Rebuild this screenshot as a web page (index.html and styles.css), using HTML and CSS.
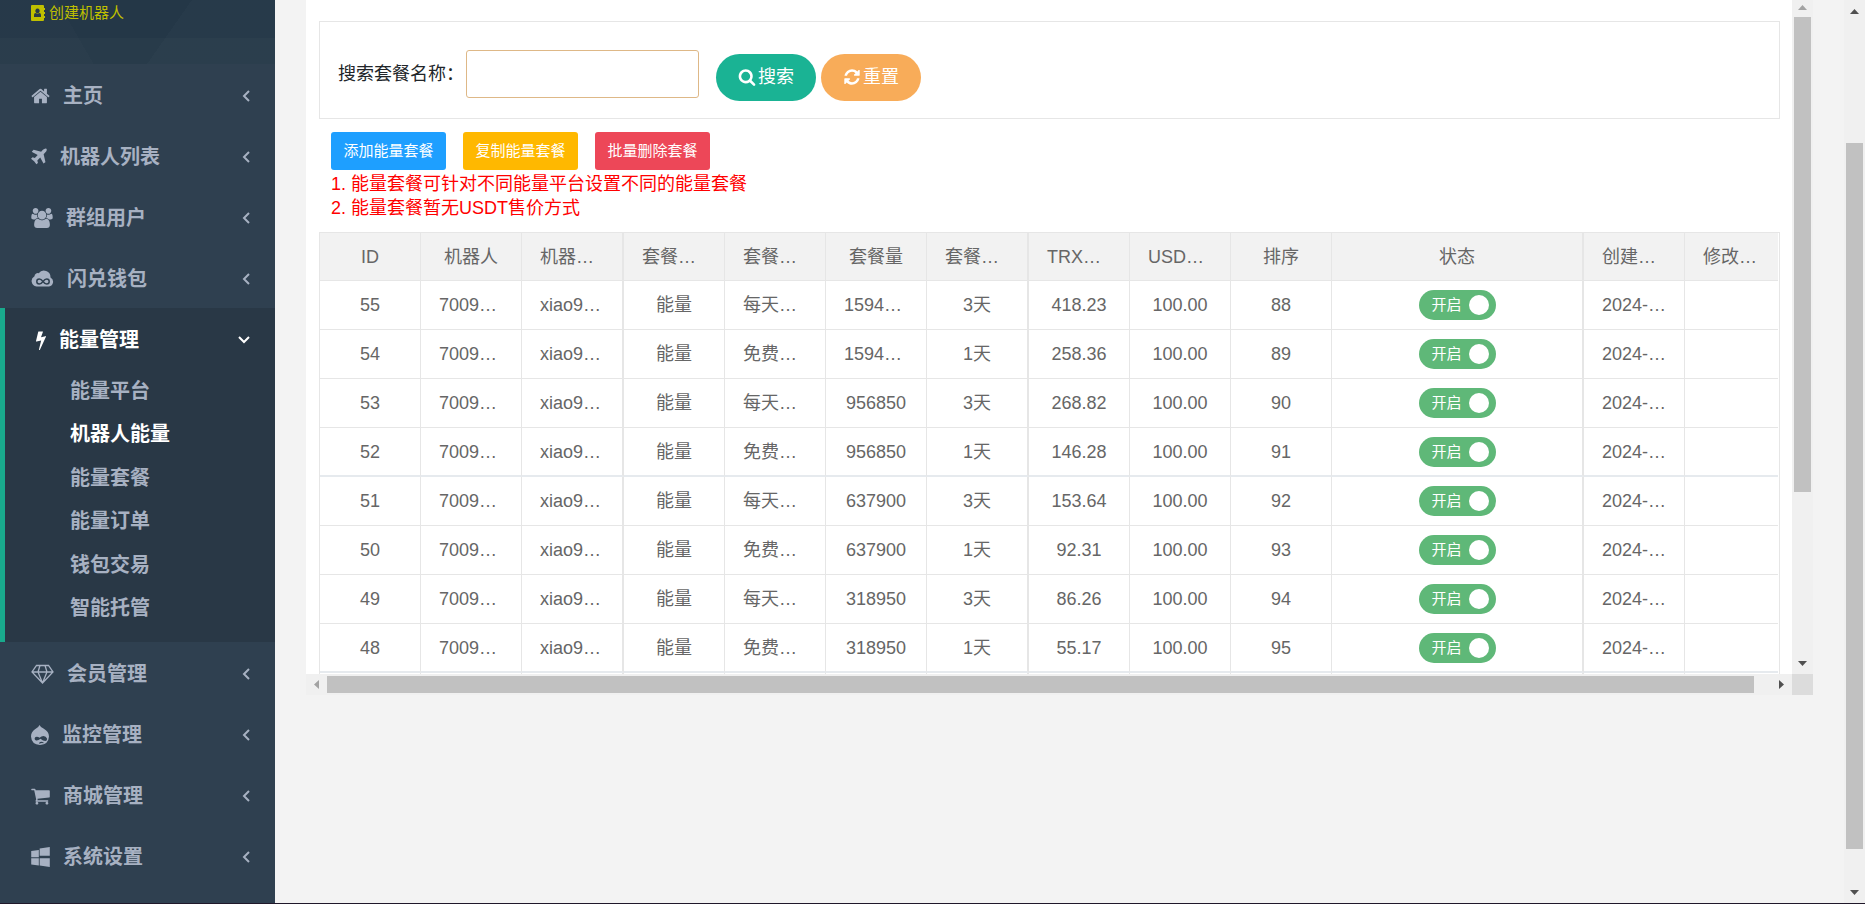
FILE: index.html
```html
<!DOCTYPE html>
<html lang="zh-CN">
<head>
<meta charset="utf-8">
<title>能量套餐</title>
<link rel="stylesheet" href="styles.css">
</head>
<body>
<div class="app">
  <nav class="sidebar">
    <div class="profile">
      <a class="profile-link" href="#"><svg class="book" viewBox="0 0 15 16"><path fill="currentColor" fill-rule="evenodd" d="M1 0h11q1 0 1 1v2h1v2h-1v2h1v2h-1v2h1v2h-1v2q0 1-1 1H1q-1 0-1-1V1q0-1 1-1zM6.500 3.500a2.200 2.400 0 1 0 .01 0zM3 12h7V10q0-2-1.700-2Q6.500 9.500 4.700 8 3 8 3 10z"/></svg>创建机器人</a>
    </div>
    <ul class="menu">
      <li><a class="item" href="#"><svg class="w19" viewBox="64 0 1664 1792"><path d="M1472 992v480q0 26-19 45t-45 19h-384v-384h-256v384h-384q-26 0-45-19t-19-45v-480q0-1 .5-3t.5-3l575-474 575 474q1 2 1 6zm223-69l-62 74q-8 9-21 11h-3q-13 0-21-7l-692-577-692 577q-12 8-24 7-13-2-21-11l-62-74q-8-10-7-23.500t11-21.500l719-599q32-26 76-26t76 26l244 204v-195q0-14 9-23t23-9h192q14 0 23 9t9 23v408l219 182q10 8 11 21.500t-7 23.500z"/></svg><span>主页</span><svg class="arrow" viewBox="0 0 8 12"><path d="M7 1L2 6l5 5"/></svg></a></li>
      <li><a class="item" href="#"><svg class="w16" viewBox="192 0 1408 1792"><path d="M1568 160q44 52 12 148t-108 172l-161 161 160 696q5 19-12 33l-128 96q-7 6-19 6-4 0-7-1-15-3-21-16l-279-508-259 259 53 194q5 17-8 31l-96 96q-9 9-23 9h-2q-15-2-24-13l-189-252-252-189q-11-7-13-23-1-13 9-25l96-97q9-9 23-9 6 0 8 1l194 53 259-259-508-279q-14-8-17-24-2-16 9-27l128-128q14-13 30-8l665 159 160-160q76-76 172-108t148 12z"/></svg><span>机器人列表</span><svg class="arrow" viewBox="0 0 8 12"><path d="M7 1L2 6l5 5"/></svg></a></li>
      <li><a class="item" href="#"><svg class="w22" viewBox="-64 0 1920 1792"><path d="M529 896q-162 5-265 128h-134q-82 0-138-40.500t-56-118.500q0-353 124-353 6 0 43.500 21t97.500 42.500 119 21.500q67 0 133-23-5 37-5 66 0 139 81 256zm1071 637q0 120-73 189.500t-194 69.500h-874q-121 0-194-69.500t-73-189.500q0-53 3.500-103.500t14-109 26.500-108.500 43-97.500 62-81 85.500-53.500 111.500-20q10 0 43 21.500t73 48 107 48 135 21.500 135-21.500 107-48 73-48 43-21.500q61 0 111.500 20t85.500 53.500 62 81 43 97.500 26.500 108.500 14 109 3.500 103.500zm-1024-1277q0 106-75 181t-181 75-181-75-75-181 75-181 181-75 181 75 75 181zm704 384q0 159-112.500 271.500t-271.500 112.500-271.500-112.500-112.500-271.500 112.500-271.500 271.500-112.500 271.500 112.500 112.500 271.500zm576 225q0 78-56 118.500t-138 40.500h-134q-103-123-265-128 81-117 81-256 0-29-5-66 66 23 133 23 59 0 119-21.500t97.500-42.500 43.500-21q124 0 124 353zm-128-609q0 106-75 181t-181 75-181-75-75-181 75-181 181-75 181 75 75 181z"/></svg><span>群组用户</span><svg class="arrow" viewBox="0 0 8 12"><path d="M7 1L2 6l5 5"/></svg></a></li>
      <li><a class="item" href="#"><svg class="w23" viewBox="0 0 23 20"><path d="M5.500 17.500A5.500 5.500 0 0 1 3.500 7.200a3.300 3.300 0 0 1 4.200-3A6.600 6.600 0 0 1 19.500 8.500 4.800 4.800 0 0 1 18 17.500z"/><path class="infinity" d="M12 12.500C10.500 10.500 9.500 10 8.300 10a2.500 2.500 0 0 0 0 5c1.200 0 2.200-.5 3.700-2.500s2.500-2.500 3.700-2.500a2.500 2.500 0 0 1 0 5c-1.200 0-2.200-.5-3.700-2.500z"/></svg><span>闪兑钱包</span><svg class="arrow" viewBox="0 0 8 12"><path d="M7 1L2 6l5 5"/></svg></a></li>
      <li class="active"><a class="item" href="#"><svg class="w10" viewBox="448 0 896 1792"><path d="M1333 566q18 20 7 44l-540 1157q-13 25-42 25-4 0-14-2-17-5-25.500-19t-4.500-30l197-808-406 101q-4 1-12 1-18 0-31-11-18-15-13-39l201-825q4-16 17-26t31-10h328q19 0 32 12.500t13 29.500q0 8-5 18l-171 463 396-98q8-2 12-2 19 0 34 15z"/></svg><span>能量管理</span><svg class="arrow down" viewBox="0 0 12 8"><path d="M1 1l5 5 5-5"/></svg></a>
        <ul class="submenu">
          <li><a href="#">能量平台</a></li>
          <li><a class="current" href="#">机器人能量</a></li>
          <li><a href="#">能量套餐</a></li>
          <li><a href="#">能量订单</a></li>
          <li><a href="#">钱包交易</a></li>
          <li><a href="#">智能托管</a></li>
        </ul>
      </li>
      <li><a class="item" href="#"><svg class="w23" viewBox="0 0 23 20"><path class="line" d="M5.500 1.500h12L22 8 11.500 19 1 8zM1 8h21M9 1.500L7 8l4.500 11L16 8l-2-6.500"/></svg><span>会员管理</span><svg class="arrow" viewBox="0 0 8 12"><path d="M7 1L2 6l5 5"/></svg></a></li>
      <li><a class="item" href="#"><svg class="w18" viewBox="0 0 18 20"><path fill-rule="evenodd" d="M8.500 0q1 2 4 3.500Q18 6.500 18 11.500 17.500 19.500 9 20 .5 19.500 0 11.500 0 7 4 4.300 8 2 8.500 0zM12.500 11q-2 0-4 1.800Q6.500 11 4.500 12 2.500 14 5 15.500q2 .5 4.500-1.700Q12 16 14.500 16q2-.5 1.500-2.500-1-2.500-3.500-2.500zM8 18q2-2 4.500-.5.500.5 0 .8-2-.8-3.500.3-.8.200-1-.6z"/></svg><span>监控管理</span><svg class="arrow" viewBox="0 0 8 12"><path d="M7 1L2 6l5 5"/></svg></a></li>
      <li><a class="item" href="#"><svg class="w19" viewBox="64 0 1664 1792"><path d="M704 1536q0 52-38 90t-90 38-90-38-38-90 38-90 90-38 90 38 38 90zm896 0q0 52-38 90t-90 38-90-38-38-90 38-90 90-38 90 38 38 90zm128-1088v512q0 24-16.500 42.500t-40.500 21.500l-1044 122q13 60 13 70 0 16-24 64h920q26 0 45 19t19 45-19 45-45 19h-1024q-26 0-45-19t-19-45q0-11 8-31.500t16-36 21.500-40 15.500-29.500l-177-823h-204q-26 0-45-19t-19-45 19-45 45-19h256q16 0 28.500 6.500t19.500 15.500 13 24.500 8 26 5.500 29.500 4.500 26h1201q26 0 45 19t19 45z"/></svg><span>商城管理</span><svg class="arrow" viewBox="0 0 8 12"><path d="M7 1L2 6l5 5"/></svg></a></li>
      <li><a class="item" href="#"><svg class="w19" viewBox="64 0 1664 1792"><path d="M746 1006v651l-682-94v-557h682zm0-743v659h-682v-565zm982 743v786l-907-125v-661h907zm0-1006v794h-907v-669z"/></svg><span>系统设置</span><svg class="arrow" viewBox="0 0 8 12"><path d="M7 1L2 6l5 5"/></svg></a></li>
    </ul>
  </nav>

  <div class="workspace">
    <div class="frame">
      <main class="content">
        <form class="search">
          <label for="name">搜索套餐名称：</label>
          <input id="name" type="text">
          <div class="search-actions">
            <button type="button" class="pill go"><svg viewBox="64 0 1664 1792"><path d="M1216 832q0-185-131.500-316.500t-316.500-131.500-316.500 131.500-131.500 316.500 131.500 316.500 316.500 131.500 316.500-131.500 131.500-316.500zm512 832q0 52-38 90t-90 38q-54 0-90-38l-343-342q-179 124-399 124-143 0-273.500-55.500t-225-150-150-225-55.500-273.500 55.500-273.500 150-225 225-150 273.500-55.500 273.500 55.500 225 150 150 225 55.500 273.500q0 220-124 399l343 343q37 37 37 90z"/></svg>搜索</button>
            <button type="button" class="pill reset"><svg viewBox="128 0 1536 1792"><path d="M1639 1056q0 5-1 7-64 268-268 434.500t-478 166.500q-146 0-282.500-55t-243.500-157l-129 129q-19 19-45 19t-45-19-19-45v-448q0-26 19-45t45-19h448q26 0 45 19t19 45-19 45l-137 137q71 66 161 102t187 36q134 0 250-65t186-179q11-17 53-117 8-23 30-23h192q13 0 22.500 9.500t9.500 22.500zm25-800v448q0 26-19 45t-45 19h-448q-26 0-45-19t-19-45 19-45l138-138q-148-137-349-137-134 0-250 65t-186 179q-11 17-53 117-8 23-30 23h-199q-13 0-22.500-9.500t-9.500-22.500v-7q65-268 270-434.500t480-166.500q146 0 284 55.500t245 156.500l130-129q19-19 45-19t45 19 19 45z"/></svg>重置</button>
          </div>
        </form>
        <div class="toolbar">
          <button type="button" class="btn add">添加能量套餐</button>
          <button type="button" class="btn copy">复制能量套餐</button>
          <button type="button" class="btn remove">批量删除套餐</button>
        </div>
        <div class="notes">
          <p>1. 能量套餐可针对不同能量平台设置不同的能量套餐</p>
          <p>2. 能量套餐暂无USDT售价方式</p>
        </div>
        <div class="grid">
          <table>
            <colgroup><col class="c"><col class="c"><col class="c-wide"><col class="c"><col class="c"><col class="c"><col class="c-wide"><col class="c"><col class="c"><col class="c"><col><col class="c"><col class="c-last"></colgroup>
            <thead><tr><th>ID</th><th>机器人</th><th class="cut thick">机器…</th><th class="cut">套餐…</th><th class="cut">套餐…</th><th>套餐量</th><th class="cut thick">套餐…</th><th class="cut">TRX…</th><th class="cut">USD…</th><th>排序</th><th class="thick">状态</th><th class="cut">创建…</th><th class="cut">修改…</th></tr></thead>
            <tbody id="rows"></tbody>
          </table>
        </div>
      </main>
      <div class="bar vertical"><svg class="tip faint" viewBox="0 0 9 5"><path d="M0 5h9L4.500 0z"/></svg><div class="thumb inner"></div><svg class="tip" viewBox="0 0 9 5"><path d="M0 0h9L4.500 5z"/></svg></div>
      <div class="bar horizontal"><svg class="tip side faint" viewBox="0 0 5 9"><path d="M5 0v9L0 4.500z"/></svg><div class="thumb wide"></div><svg class="tip side" viewBox="0 0 5 9"><path d="M0 0v9l5-4.500z"/></svg></div>
      <div class="corner"></div>
    </div>
  </div>
  <div class="bar vertical page-bar"><svg class="tip" viewBox="0 0 9 5"><path d="M0 5h9L4.500 0z"/></svg><div class="thumb outer"></div><svg class="tip" viewBox="0 0 9 5"><path d="M0 0h9L4.500 5z"/></svg></div>
</div>
<script src="rows.js"></script>
</body>
</html>
```
FILE: rows.js
```js
const packages = [
  [55, '每天…', '1594…', '3天', '418.23', 88],
  [54, '免费…', '1594…', '1天', '258.36', 89],
  [53, '每天…', '956850', '3天', '268.82', 90],
  [52, '免费…', '956850', '1天', '146.28', 91],
  [51, '每天…', '637900', '3天', '153.64', 92],
  [50, '免费…', '637900', '1天', '92.31', 93],
  [49, '每天…', '318950', '3天', '86.26', 94],
  [48, '免费…', '318950', '1天', '55.17', 95]
];
const cell = (text, thick) => {
  const cls = [String(text).endsWith('…') ? 'cut' : '', thick ? 'thick' : ''].join(' ').trim();
  return `<td class="${cls}">${text}</td>`;
};
const toggle = id => `<label class="switch"><input type="checkbox" checked aria-label="状态 ${id}"><span>开启</span><i></i></label>`;
document.getElementById('rows').innerHTML = packages.map(([id, name, amount, days, trx, order]) =>
  '<tr>' + cell(id) + cell('7009…') + cell('xiao9…', true) + cell('能量') + cell(name) + cell(amount) +
  cell(days, true) + cell(trx) + cell('100.00') + cell(order) + cell(toggle(id), true) + cell('2024-…') + cell('') + '</tr>'
).join('') + '<tr class="next">' + Array.from({ length: 13 }, (_, i) => cell('', [2, 6, 10].includes(i))).join('') + '</tr>';
```
FILE: styles.css
```css
* { box-sizing: border-box; }
body {
  margin: 0;
  background: #f3f3f3;
  font-family: "Liberation Sans", "Noto Sans CJK SC", sans-serif;
  font-size: 18px;
  line-height: 24px;
  color: #212529;
}
ul { list-style: none; margin: 0; padding: 0; }
a { color: inherit; text-decoration: none; }
p { margin: 0; }
svg { display: block; flex: none; fill: currentColor; }
button { font-family: inherit; line-height: 24px; border: 0; color: #fff; cursor: pointer; }

.app {
  display: flex;
  height: 100vh;
  overflow: hidden;
  border-bottom: 1px solid #20182a;
}

/* sidebar */
.sidebar { flex: none; width: 275px; background: #2f4050; color: #a7b1c2; }
.profile {
  height: 64px;
  background:
    linear-gradient(125deg, transparent 60%, rgba(255, 255, 255, .015) 60%),
    linear-gradient(60deg, rgba(255, 255, 255, .01) 30%, transparent 30%),
    linear-gradient(#243747 38px, #283b4a 38px);
}
.profile-link {
  display: flex;
  align-items: center;
  gap: 3px;
  height: 25px;
  padding-left: 31px;
  color: #bfbf00;
  font-size: 15px;
}
.book { width: 15px; height: 16px; }
.item {
  display: flex;
  align-items: center;
  gap: 13px;
  height: 61px;
  padding: 2px 25px 0 31px;
  font-size: 20px;
  font-weight: 700;
}
.item svg { height: 20px; }
.item .w10 { width: 10px; }
.item .w16 { width: 16px; }
.item .w18 { width: 18px; }
.item .w19 { width: 19px; }
.item .w22 { width: 22px; }
.item .w23 { width: 23px; }
.item .arrow { width: 8px; height: 12px; margin-left: auto; }
.item .down { width: 12px; height: 8px; }
.arrow path, .line { fill: none; stroke: currentColor; stroke-width: 2; }
.line { stroke-width: 1.300; }
.infinity { fill: none; stroke: #2f4050; stroke-width: 1.500; }
.active { background: #293846; border-left: 5px solid #19aa8d; }
.active .item { color: #fff; }
.submenu { height: 273px; padding-bottom: 12px; display: flex; flex-direction: column; }
.submenu li { flex: 1; display: flex; align-items: center; padding-left: 65px; font-size: 20px; font-weight: 700; }
.submenu .current { color: #fff; }

/* framed page */
.workspace { flex: 1; min-width: 0; padding: 0 31px; }
.frame { display: grid; grid-template-columns: minmax(0, 1fr) 21px; }
.content { background: #fff; padding: 21px 12px 0 13px; }
.search {
  display: flex;
  align-items: center;
  height: 98px;
  padding: 8px 18px 0;
  border: 1px solid #e6e6e6;
}
.search label { width: 128px; white-space: nowrap; }
.search input {
  width: 233px;
  height: 48px;
  margin: 0 17px 0 0;
  padding: 0 12px;
  border: 1px solid #deb887;
  border-radius: 3px;
  font-size: 18px;
}
.search-actions { display: flex; gap: 5px; padding-top: 6px; }
.pill {
  display: flex;
  align-items: center;
  justify-content: center;
  gap: 2px;
  width: 100px;
  height: 47px;
  padding: 0;
  border-radius: 25px;
  font-size: 18px;
}
.pill svg { width: 18px; height: 18px; }
.go { background: #1ab394; }
.reset { background: #f8ac59; }
.toolbar { display: flex; gap: 17px; padding: 13px 12px 0; }
.btn { width: 115px; height: 38px; padding: 0; border-radius: 3px; font-size: 15px; }
.add { background: #1e9fff; }
.copy { background: #ffb800; }
.remove { background: #ed4758; }
.notes { padding: 2px 12px 12px; color: #f00; }

/* table */
.grid { border: 1px solid #e6e6e6; border-bottom: 0; padding-right: 1px; }
table { width: 100%; table-layout: fixed; border-collapse: separate; border-spacing: 0; color: #666; }
.c { width: 101px; }
.c-wide { width: 102px; }
.c-last { width: 93px; }
th, td {
  height: 49px;
  padding: 0;
  border-right: 1px solid #e6e6e6;
  border-bottom: 1px solid #e6e6e6;
  font-weight: 400;
  text-align: center;
  white-space: nowrap;
  overflow: hidden;
}
th { height: 48px; background: #f2f2f2; }
th:last-child, td:last-child { border-right: 0; }
tr:nth-child(4n) td { border-bottom: 2px solid #e6eaee; }
.cut { text-align: left; padding-left: 18px; }
th.thick, td.thick { border-right-width: 2px; }
.next td { height: 1px; border-bottom: 0; }
.switch {
  display: flex;
  align-items: center;
  justify-content: space-between;
  position: relative;
  width: 77px;
  height: 30px;
  margin: 0 auto;
  padding: 0 7px 0 13px;
  border-radius: 15px;
  background: #5fb878;
  color: #fff;
  font-size: 15px;
}
.switch input { position: absolute; inset: 0; width: 100%; height: 100%; margin: 0; opacity: 0; }
.switch i { width: 20px; height: 20px; border-radius: 50%; background: #fff; }

/* scroll bars */
.bar { display: flex; align-items: center; background: #f0f0f0; }
.vertical { flex-direction: column; padding: 5px 0 8px; gap: 7px; }
.thumb { background: #c1c1c1; }
.vertical .thumb { width: 17px; }
.inner { height: 475px; }
.outer { height: 706px; margin-top: 122px; }
.vertical .tip:last-child { margin-top: auto; }
.horizontal { height: 21px; padding: 0 8px; gap: 8px; }
.wide { flex: 1; height: 17px; margin-right: 17px; }
.tip { width: 9px; height: 5px; color: #505050; }
.side { width: 5px; height: 9px; }
.faint { color: #a3a3a3; }
.corner { background: #dcdcdc; }
.page-bar { flex: none; width: 21px; padding-top: 9px; }
```
